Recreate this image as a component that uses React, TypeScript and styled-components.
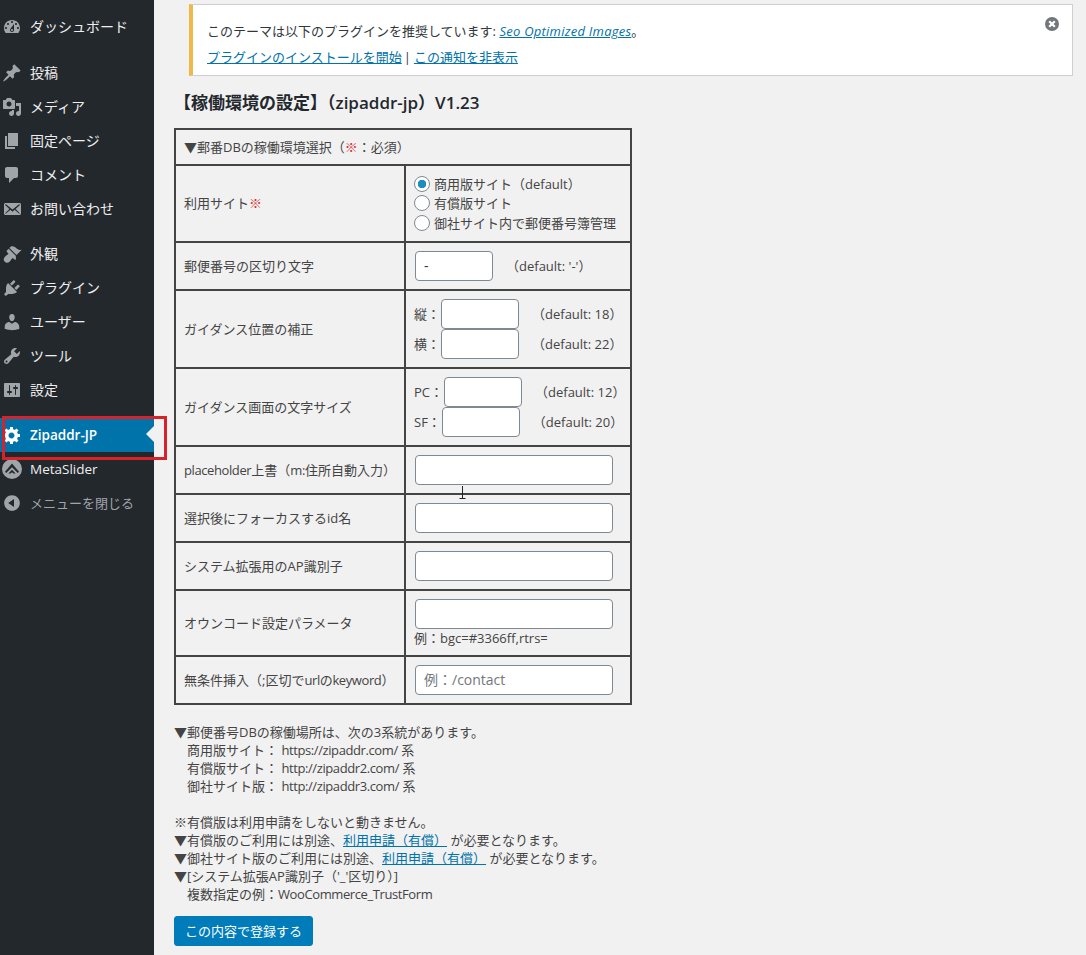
import React from 'react';
import styled, { createGlobalStyle } from 'styled-components';

const GlobalStyle = createGlobalStyle`
  html, body {
    margin: 0;
    background: #f1f1f1;
  }
  body {
    font-family: "Open Sans", "Noto Sans CJK JP", sans-serif;
    font-size: 13px;
    line-height: 18px;
    color: #444;
  }
`;

const Page = styled.div`
  position: relative;
  display: flex;
  min-height: 955px;
  overflow: hidden;
`;

const Sidebar = styled.nav`
  flex: 0 0 154px;
  padding-top: 10px;
  background: #23282d;
`;

const MenuItem = styled.a<{ $active?: boolean; $gap?: number; $muted?: boolean; $small?: boolean }>`
  position: relative;
  display: flex;
  align-items: center;
  gap: 8px;
  height: 34px;
  margin-top: ${(p) => p.$gap ?? 0}px;
  padding-left: 2px;
  font-size: ${(p) => (p.$muted ? '13px' : p.$small ? '13.5px' : '14px')};
  font-weight: ${(p) => (p.$active ? 600 : 400)};
  color: ${(p) => (p.$active ? '#fff' : p.$muted ? '#a0a5aa' : '#eee')};
  background: ${(p) => (p.$active ? '#0073aa' : 'transparent')};
`;

const MenuIcon = styled.svg<{ $active?: boolean }>`
  flex: 0 0 20px;
  width: 20px;
  height: 20px;
  fill: ${(p) => (p.$active ? '#fff' : '#a0a5aa')};
`;

const ActiveArrow = styled.span`
  position: absolute;
  right: 0;
  top: 8px;
  border: 8px solid transparent;
  border-right-color: #f1f1f1;
  border-left-width: 0;
`;

const RedFrame = styled.div`
  position: absolute;
  left: 2px;
  top: 416px;
  width: 165px;
  height: 44px;
  box-sizing: border-box;
  border: 3px solid #d8222a;
`;

const TextCursor = styled.svg`
  position: absolute;
  left: 458px;
  top: 485px;
  width: 9px;
  height: 15px;
  stroke: #222;
  fill: none;
`;

const Main = styled.main`
  flex: 1;
  min-width: 0;
  padding: 4px 13px 0 20px;
`;

const Notice = styled.div`
  margin-left: 15px;
  height: 72px;
  box-sizing: border-box;
  padding: 13px 12px 5px 14px;
  background: #fff;
  border: 1px solid #ccd0d4;
  border-left: 4px solid #f0b849;
  position: relative;
  line-height: 26px;
`;

const NoticeLine = styled.div`
  height: 26px;
  color: #32373c;
`;

const Link = styled.a<{ $italic?: boolean }>`
  color: #0073aa;
  text-decoration: underline;
  font-style: ${(p) => (p.$italic ? 'italic' : 'normal')};
  letter-spacing: ${(p) => (p.$italic ? '0.25px' : 'normal')};
`;

const Separator = styled.span`
  margin: 0 3px 0 2px;
`;

const Dismiss = styled.svg`
  position: absolute;
  top: 11px;
  right: 12px;
  width: 16px;
  height: 16px;
`;

const Title = styled.h2`
  margin: 16px 0 14px;
  font-size: 17px;
  line-height: 22px;
  font-weight: 600;
  color: #23282d;
`;

const FormTable = styled.table`
  width: 458px;
  table-layout: fixed;
  border-collapse: collapse;
  border: 2px solid #444;
`;

const LabelColumn = styled.col`
  width: 230px;
`;

const Cell = styled.td`
  padding: 8px 9px;
  border: 2px solid #444;
  vertical-align: middle;
  line-height: 18px;
  box-sizing: border-box;
  white-space: nowrap;
`;

const LabelCell = styled(Cell)`
  padding-left: 8px;
`;

const Required = styled.span`
  color: #dc3232;
`;

const Narrow = styled.span`
  letter-spacing: -0.4px;
`;

const RadioRow = styled.label`
  display: flex;
  align-items: center;
  gap: 4px;
  height: 19.5px;
  margin-left: -1px;
`;

const Radio = styled.input`
  appearance: none;
  width: 16px;
  height: 16px;
  margin: 0;
  border: 1px solid #7e8993;
  border-radius: 50%;
  background: #fff;

  &:checked {
    background: radial-gradient(circle, #1e8cbe 0 4px, #fff 4.5px);
  }
`;

const TextInput = styled.input<{ $width: number }>`
  display: block;
  flex: none;
  width: ${(p) => p.$width}px;
  height: 30px;
  box-sizing: border-box;
  padding: 0 8px;
  border: 1px solid #7e8993;
  border-radius: 4px;
  background: #fff;
  color: #32373c;
  font: inherit;
  font-size: 14px;

  &::placeholder {
    color: #72777c;
  }
`;

const InputRow = styled.div`
  display: flex;
  align-items: center;
  height: 30px;
`;

const AxisLabel = styled.span`
  flex: none;
  margin: 0 1px 0 -1px;
`;

const Hint = styled.span`
  margin-left: 13px;
`;

const Example = styled.div`
  margin-left: -1px;
`;

const Notes = styled.div`
  margin-top: 18px;
  line-height: 18px;
  white-space: pre;
`;

const SubmitButton = styled.button`
  display: block;
  margin-top: 13px;
  width: 139px;
  height: 30px;
  padding: 0;
  border: 1px solid #007cba;
  border-radius: 3px;
  background: #007cba;
  color: #fff;
  font: inherit;
`;

const menu = [
  {
    label: 'ダッシュボード',
    d: 'M3.76 16h12.48c1.1-1.37 1.76-3.11 1.76-5 0-4.42-3.58-8-8-8s-8 3.58-8 8c0 1.89.66 3.63 1.76 5zM10 4c.55 0 1 .45 1 1s-.45 1-1 1-1-.45-1-1 .45-1 1-1zM6 6c.55 0 1 .45 1 1s-.45 1-1 1-1-.45-1-1 .45-1 1-1zm8 0c.55 0 1 .45 1 1s-.45 1-1 1-1-.45-1-1 .45-1 1-1zm-5.37 5.55L12 7v6c0 1.1-.9 2-2 2s-2-.9-2-2c0-.57.24-1.08.63-1.45zM4 10c.55 0 1 .45 1 1s-.45 1-1 1-1-.45-1-1 .45-1 1-1zm12 0c.55 0 1 .45 1 1s-.45 1-1 1-1-.45-1-1 .45-1 1-1zm-5 3c0-.55-.45-1-1-1s-1 .45-1 1 .45 1 1 1 1-.45 1-1z',
  },
  {
    label: '投稿',
    gap: 12,
    d: 'M10.44 3.02l1.82-1.82 6.36 6.35-1.83 1.82c-1.05-.68-2.48-.57-3.41.36l-.75.75c-.92.93-1.04 2.35-.35 3.41l-1.83 1.82-2.41-2.41-2.8 2.79c-.42.42-3.38 2.71-3.8 2.29s1.86-3.39 2.28-3.81l2.79-2.79L4.1 9.36l1.83-1.82c1.05.69 2.48.57 3.4-.36l.75-.75c.93-.92 1.05-2.35.36-3.41z',
  },
  {
    label: 'メディア',
    d: 'M13 11V4c0-.55-.45-1-1-1h-1.67L9 1H5L3.67 3H2c-.55 0-1 .45-1 1v7c0 .55.45 1 1 1h10c.55 0 1-.45 1-1zM7 4.5c1.38 0 2.5 1.12 2.5 2.5S8.38 9.5 7 9.5 4.5 8.38 4.5 7 5.62 4.5 7 4.5zM14 6h5v10.5c0 1.38-1.12 2.5-2.5 2.5S14 17.88 14 16.5s1.12-2.5 2.5-2.5c.17 0 .34.02.5.05V9h-3V6zm-4 8.05V13h2v3.5c0 1.38-1.12 2.5-2.5 2.5S7 17.88 7 16.5 8.12 14 9.5 14c.17 0 .34.02.5.05z',
  },
  { label: '固定ページ', d: 'M6 15V2h10v13H6zm-1 1h8v2H3V5h2v11z' },
  {
    label: 'コメント',
    d: 'M5 2h9c1.1 0 2 .9 2 2v7c0 1.1-.9 2-2 2h-2l-5 5v-5H5c-1.1 0-2-.9-2-2V4c0-1.1.9-2 2-2z',
  },
  {
    label: 'お問い合わせ',
    d: 'M19 14.5v-9c0-.83-.67-1.5-1.5-1.5H3.49c-.83 0-1.5.67-1.5 1.5v9c0 .83.67 1.5 1.5 1.5H17.5c.83 0 1.5-.67 1.5-1.5zm-1.31-9.11c.33.33.15.67-.03.84L13.6 9.95l3.9 4.06c.12.14.2.36.06.51-.13.16-.43.15-.56.05l-4.37-3.73-2.14 1.95-2.13-1.95-4.37 3.73c-.13.1-.43.11-.56-.05-.14-.15-.06-.37.06-.51l3.9-4.06-4.06-3.72c-.18-.17-.36-.51-.03-.84s.67-.17.95.07l6.24 5.04 6.25-5.04c.28-.24.62-.4.95-.07z',
  },
  {
    label: '外観',
    gap: 11,
    d: 'M14.48 11.06L7.41 3.99l1.5-1.5c.5-.56 2.3-.47 3.51.32 1.21.8 1.43 1.28 2.91 2.1 1.18.64 2.45 1.26 4.45.85zm-.71.71L6.7 4.7 4.93 6.47c-.39.39-.39 1.02 0 1.41l1.06 1.06c.39.39.39 1.03 0 1.42-.6.6-1.43 1.11-2.21 1.69-.35.26-.7.53-1.01.84-1.43 1.43-1.4 3.52-.07 4.85s3.42 1.36 4.85-.07c.31-.31.58-.66.84-1.01.58-.78 1.09-1.61 1.69-2.21.39-.39 1.03-.39 1.42 0l1.06 1.06c.39.39 1.02.39 1.41 0z',
  },
  {
    label: 'プラグイン',
    d: 'M13.11 4.36L9.87 7.6 8 5.73l3.24-3.24c.35-.34 1.05-.2 1.56.32.52.51.66 1.21.31 1.55zm-8 1.77l.91-1.12 9.01 9.01-1.19.84c-.71.71-2.63 1.16-3.82 1.16H6.14L4.9 17.26c-.59.59-1.54.59-2.12 0-.59-.58-.59-1.53 0-2.12l1.24-1.24v-3.88c0-1.13.4-3.19 1.09-3.89zm7.26 3.97l3.24-3.24c.34-.35 1.04-.21 1.55.31.52.51.66 1.21.31 1.55l-3.24 3.25z',
  },
  {
    label: 'ユーザー',
    d: 'M10 9.25c-2.27 0-2.73-3.44-2.73-3.44C7 4.02 7.82 2 9.97 2c2.16 0 2.98 2.02 2.71 3.81 0 0-.41 3.44-2.68 3.44zm0 2.57L12.72 10c2.39 0 4.52 2.33 4.52 4.53v2.49s-3.65 1.13-7.24 1.13c-3.65 0-7.24-1.13-7.24-1.13v-2.49c0-2.25 1.94-4.48 4.47-4.48z',
  },
  {
    label: 'ツール',
    d: 'M16.68 9.77c-1.34 1.34-3.3 1.67-4.95.99l-5.41 6.52c-.99.99-2.59.99-3.58 0s-.99-2.59 0-3.57l6.52-5.42c-.68-1.65-.35-3.61.99-4.95 1.28-1.28 3.12-1.62 4.72-1.06l-2.89 2.89 2.82 2.82 2.86-2.87c.53 1.58.18 3.39-1.08 4.65zM3.81 16.21c.4.39 1.04.39 1.43 0 .4-.4.4-1.04 0-1.43-.39-.4-1.03-.4-1.43 0-.39.39-.39 1.03 0 1.43z',
  },
  {
    label: '設定',
    d: 'M18 16V4c0-.55-.45-1-1-1H3c-.55 0-1 .45-1 1v12c0 .55.45 1 1 1h14c.55 0 1-.45 1-1zM8 11h1c.55 0 1 .45 1 1s-.45 1-1 1H8v1.5c0 .28-.22.5-.5.5s-.5-.22-.5-.5V13H6c-.55 0-1-.45-1-1s.45-1 1-1h1V5.5c0-.28.22-.5.5-.5s.5.22.5.5V11zm5-2h-1c-.55 0-1-.45-1-1s.45-1 1-1h1V5.5c0-.28.22-.5.5-.5s.5.22.5.5V7h1c.55 0 1 .45 1 1s-.45 1-1 1h-1v5.5c0 .28-.22.5-.5.5s-.5-.22-.5-.5V9z',
  },
  {
    label: 'Zipaddr-JP',
    gap: 11,
    active: true,
    small: true,
    d: 'M18 12h-2.18c-.17.7-.44 1.35-.81 1.93l1.54 1.54-2.1 2.1-1.54-1.54c-.58.36-1.23.63-1.91.79V19H8v-2.18c-.68-.16-1.33-.43-1.91-.79l-1.54 1.54-2.12-2.12 1.54-1.54c-.36-.58-.63-1.23-.79-1.91H1V9.03h2.17c.16-.7.44-1.35.8-1.94L2.43 5.55l2.1-2.1 1.54 1.54c.58-.37 1.24-.64 1.93-.81V2h3v2.18c.68.16 1.33.43 1.91.79l1.54-1.54 2.12 2.12-1.54 1.54c.36.59.64 1.24.8 1.94H18V12zm-8.5 1.5c1.66 0 3-1.34 3-3s-1.34-3-3-3-3 1.34-3 3 1.34 3 3 3z',
  },
  {
    label: 'MetaSlider',
    small: true,
    d: 'M10 0a10 10 0 1 0 0 20 10 10 0 0 0 0-20zM10 4.5l7 8.2-1.2 1.3L10 8.2 4.2 14 3 12.7zm0 6.2l3.6 3.9h-2.2L10 13.2l-1.4 1.4H6.4z',
  },
  {
    label: 'メニューを閉じる',
    muted: true,
    d: 'M10 2.16c4.33 0 7.84 3.51 7.84 7.84s-3.51 7.84-7.84 7.84S2.16 14.33 2.16 10 5.71 2.16 10 2.16zm2 11.72V6.12L6.18 9.97z',
  },
];

const sizeRows = [
  {
    label: 'ガイダンス位置の補正',
    fields: [
      { axis: '縦：', hint: '（default: 18）' },
      { axis: '横：', hint: '（default: 22）' },
    ],
  },
  {
    label: 'ガイダンス画面の文字サイズ',
    fields: [
      { axis: 'PC：', hint: '（default: 12）' },
      { axis: 'SF：', hint: '（default: 20）' },
    ],
  },
];

export default function App() {
  return (
    <Page>
      <GlobalStyle />
      <Sidebar>
        {menu.map((item) => (
          <MenuItem key={item.label} $active={item.active} $gap={item.gap} $muted={item.muted} $small={item.small}>
            <MenuIcon viewBox="0 0 20 20" $active={item.active}>
              <path d={item.d} fillRule="evenodd" />
            </MenuIcon>
            {item.label}
            {item.active && <ActiveArrow />}
          </MenuItem>
        ))}
      </Sidebar>
      <RedFrame />

      <Main>
        <Notice>
          <NoticeLine>
            このテーマは以下のプラグインを推奨しています: <Link $italic>Seo Optimized Images</Link>。
          </NoticeLine>
          <NoticeLine>
            <Link>プラグインのインストールを開始</Link>
            <Separator>|</Separator>
            <Link>この通知を非表示</Link>
          </NoticeLine>
          <Dismiss viewBox="0 0 16 16">
            <circle cx="8" cy="8" r="7" fill="#72777c" />
            <path d="M5.2 5.2l5.6 5.6M10.8 5.2l-5.6 5.6" stroke="#fff" strokeWidth="2.2" />
          </Dismiss>
        </Notice>

        <Title>【稼働環境の設定】（zipaddr-jp）V1.23</Title>

        <FormTable>
          <colgroup>
            <LabelColumn />
            <col />
          </colgroup>
          <tbody>
            <tr>
              <LabelCell colSpan={2}>
                ▼郵番DBの稼働環境選択（<Required>※</Required>：必須）
              </LabelCell>
            </tr>
            <tr>
              <LabelCell>
                利用サイト<Required>※</Required>
              </LabelCell>
              <Cell>
                <RadioRow>
                  <Radio type="radio" name="site" defaultChecked />
                  商用版サイト（default）
                </RadioRow>
                <RadioRow>
                  <Radio type="radio" name="site" />
                  有償版サイト
                </RadioRow>
                <RadioRow>
                  <Radio type="radio" name="site" />
                  御社サイト内で郵便番号簿管理
                </RadioRow>
              </Cell>
            </tr>
            <tr>
              <LabelCell>郵便番号の区切り文字</LabelCell>
              <Cell>
                <InputRow>
                  <TextInput $width={78} defaultValue="-" />
                  <Hint>（default: '-'）</Hint>
                </InputRow>
              </Cell>
            </tr>
            {sizeRows.map((row) => (
              <tr key={row.label}>
                <LabelCell>{row.label}</LabelCell>
                <Cell>
                  {row.fields.map((field) => (
                    <InputRow key={field.axis}>
                      <AxisLabel>{field.axis}</AxisLabel>
                      <TextInput $width={78} />
                      <Hint>{field.hint}</Hint>
                    </InputRow>
                  ))}
                </Cell>
              </tr>
            ))}
            <tr>
              <LabelCell>
                <Narrow>placeholder</Narrow>上書（<Narrow>m:</Narrow>住所自動入力）
              </LabelCell>
              <Cell>
                <TextInput $width={198} />
              </Cell>
            </tr>
            <tr>
              <LabelCell>選択後にフォーカスするid名</LabelCell>
              <Cell>
                <TextInput $width={198} />
              </Cell>
            </tr>
            <tr>
              <LabelCell>システム拡張用のAP識別子</LabelCell>
              <Cell>
                <TextInput $width={198} />
              </Cell>
            </tr>
            <tr>
              <LabelCell>オウンコード設定パラメータ</LabelCell>
              <Cell>
                <TextInput $width={198} />
                <Example>例：bgc=#3366ff,rtrs=</Example>
              </Cell>
            </tr>
            <tr>
              <LabelCell>
                無条件挿入（;区切で<Narrow>urlのkeyword</Narrow>）
              </LabelCell>
              <Cell>
                <TextInput $width={198} placeholder="例：/contact" />
              </Cell>
            </tr>
          </tbody>
        </FormTable>

        <Notes>
          {'▼郵便番号DBの稼働場所は、次の3系統があります。\n'}
          {'\u3000商用版サイト： '}<Narrow>https://zipaddr.com/</Narrow>{' 系\n'}
          {'\u3000有償版サイト： '}<Narrow>http://zipaddr2.com/</Narrow>{' 系\n'}
          {'\u3000御社サイト版： '}<Narrow>http://zipaddr3.com/</Narrow>{' 系\n'}
          {'\n'}
          {'※有償版は利用申請をしないと動きません。\n'}
          ▼有償版のご利用には別途、<Link>利用申請（有償）</Link>{' が必要となります。\n'}
          ▼御社サイト版のご利用には別途、<Link>利用申請（有償）</Link>{' が必要となります。\n'}
          {"▼[システム拡張AP識別子（'_'区切り）]\n"}
          {'\u3000複数指定の例：'}<Narrow>WooCommerce_TrustForm</Narrow>
        </Notes>

        <SubmitButton type="button">この内容で登録する</SubmitButton>
      </Main>

      <TextCursor viewBox="0 0 9 15">
        <path d="M4.5 1v12M1.5 13.5h6" />
      </TextCursor>
    </Page>
  );
}
